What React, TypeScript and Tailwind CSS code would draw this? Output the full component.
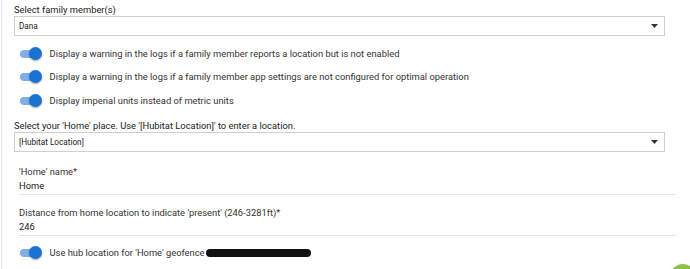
import React from 'react';

const font = { fontFamily: 'Roboto, "Liberation Sans", sans-serif' };

const Toggle = ({ label }: { label: React.ReactNode }) => (
  <div className="flex h-[23.5px] items-center pl-[5.5px]">
    <div className="relative h-[13px] w-[22px]">
      <div className="absolute left-0 top-[3px] h-[8px] w-[18px] rounded-full bg-[#7fb0e8]" />
      <div className="absolute left-[9px] top-0 h-[13px] w-[13px] rounded-full bg-[#1a73d1] shadow-[0_1px_2px_rgba(0,0,0,0.35)]" />
    </div>
    <span className="ml-[8px] text-[9.35px] leading-[13px] text-[#333]">{label}</span>
  </div>
);

const SelectBox = ({ value }: { value: string }) => (
  <div className="flex h-[20px] w-[651px] items-center justify-between border border-[#cfcfcf] bg-white pl-[4px] pr-[6px]">
    <span className="text-[8.2px] text-[#222]">{value}</span>
    <svg width="7" height="4" viewBox="0 0 7 4">
      <path d="M0 0 L7 0 L3.5 4 Z" fill="#333" />
    </svg>
  </div>
);

const TextField = ({ label, value, top }: { label: string; value: string; top: string }) => (
  <div className={`ml-[5px] w-[657px] border-b-[1.5px] border-[#e3e3e3] ${top}`}>
    <div className="h-[13px] text-[9.35px] leading-[13px] text-[#333]">{label}</div>
    <div className="h-[16px] text-[9.35px] leading-[15px] text-[#222]">{value}</div>
  </div>
);

export default function App() {
  return (
    <div
      className="relative h-[269px] w-[690px] overflow-hidden bg-white"
      style={font}
    >
      <div className="ml-[1px] h-full border-l-[1.5px] border-[#e6e6e6] pl-[12px] pt-[3px]">
        <div className="h-[13px] text-[9.35px] leading-[13px] text-[#222]">Select family member(s)</div>
        <SelectBox value="Dana" />
        <div className="pt-[5.5px]">
          <Toggle label="Display a warning in the logs if a family member reports a location but is not enabled" />
          <Toggle label="Display a warning in the logs if a family member app settings are not configured for optimal operation" />
          <Toggle label="Display imperial units instead of metric units" />
        </div>
        <div className="mt-[7px] h-[13px] text-[9.35px] leading-[13px] text-[#222]">
          Select your 'Home' place. Use '[Hubitat Location]' to enter a location.
        </div>
        <SelectBox value="[Hubitat Location]" />
        <TextField label="'Home' name*" value="Home" top="mt-[13px]" />
        <TextField
          label="Distance from home location to indicate 'present' (246-3281ft)*"
          value="246"
          top="mt-[11px]"
        />
        <div className="mt-[5px]">
          <Toggle
            label={
              <span className="flex items-center">
                Use hub location for 'Home' geofence
                <span className="ml-[1px] inline-block h-[8px] w-[105px] rounded-full bg-[#111]" />
              </span>
            }
          />
        </div>
      </div>
      <div className="absolute left-[670px] top-[264px] h-[26px] w-[26px] rounded-full bg-[#8bc34a]" />
    </div>
  );
}
